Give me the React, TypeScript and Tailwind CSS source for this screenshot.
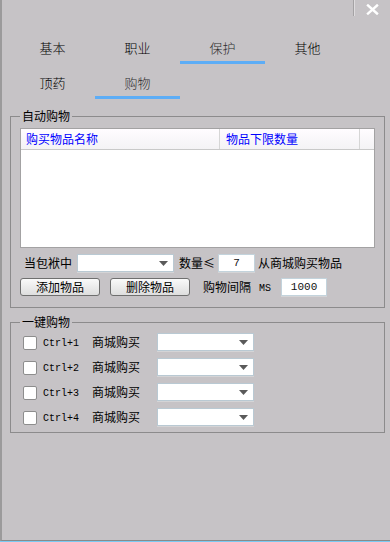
import React from "react";

const cjk = { fontFamily: '"Noto Sans CJK SC", "Noto Sans", sans-serif' };
const mono = { fontFamily: '"Liberation Mono", "DejaVu Sans Mono", monospace' };

function Combo({ width }: { width: string }) {
  return (
    <div
      className={`${width} h-[18px] bg-white border border-[#b9c9d3] shadow-[0_1px_0_#d4d4d6] flex items-center justify-end pr-[5px]`}
    >
      <svg width="9" height="5" viewBox="0 0 9 5">
        <path d="M0 0 H9 L4.5 5 Z" fill="#5a5a5a" />
      </svg>
    </div>
  );
}

function Field({ width, value }: { width: string; value: string }) {
  return (
    <div
      className={`${width} h-[18px] bg-white border border-[#c3d3dc] shadow-[0_1px_0_#d4d4d6] flex items-center justify-center text-[11px] text-[#111]`}
      style={mono}
    >
      {value}
    </div>
  );
}

function Button({ label }: { label: string }) {
  return (
    <button className="w-[80px] h-[18px] rounded-[3px] border border-[#6f6f6f] bg-gradient-to-b from-[#fafafa] to-[#dedede] text-[12px] leading-[14px] text-black flex items-center justify-center">
      {label}
    </button>
  );
}

const tabs = [
  { label: "基本", active: false },
  { label: "职业", active: false },
  { label: "保护", active: true },
  { label: "其他", active: false },
  { label: "顶药", active: false },
  { label: "购物", active: true },
];

export default function App() {
  return (
    <div
      className="w-[390px] h-[542px] bg-[#c6c3c6] flex flex-col overflow-hidden text-black"
      style={cjk}
    >
      <div className="h-[541px] border-l-2 border-b border-l-[#9b9a9b] border-b-[#8a8a8a] flex flex-col">
        {/* Title area */}
        <div className="h-[29px] relative shrink-0">
          <div className="absolute left-[351px] top-0 h-[16px] w-[2px] flex">
            <div className="w-[1px] bg-[#a4a2a4]" />
            <div className="w-[1px] bg-[#dedcde]" />
          </div>
          <svg
            className="absolute left-[364px] top-[4px]"
            width="13"
            height="11"
            viewBox="0 0 13 11"
          >
            <path
              d="M2 1.5 L11 9.5 M11 1.5 L2 9.5"
              stroke="#ffffff"
              strokeWidth="2.4"
              strokeLinecap="square"
            />
          </svg>
        </div>

        {/* Tabs */}
        <div className="grid grid-cols-[repeat(4,85px)] ml-[8px] shrink-0">
          {tabs.map((t) => (
            <div key={t.label} className="h-[35px] flex flex-col items-center">
              <span
                className={`pt-[11px] text-[13px] leading-[15px] font-light ${
                  t.active ? "text-[#2e2e2e]" : "text-black"
                }`}
              >
                {t.label}
              </span>
              {t.active && <div className="mt-auto h-[3px] w-full bg-[#5dadf6]" />}
            </div>
          ))}
        </div>

        {/* 自动购物 */}
        <fieldset className="mt-[10px] ml-[8px] w-[375px] border border-[#8c8b8c] px-[9px] pt-[5px] pb-[11px] shrink-0">
          <legend className="px-[2px] text-[12px] leading-[14px]">自动购物</legend>
          <div className="h-[120px] w-[355px] bg-white border border-[#a3a2a3] flex flex-col">
            <div className="h-[21px] flex border-b border-[#c9c9c9] bg-gradient-to-b from-[#fffcff] to-[#f4f3f5] text-[12px] leading-[20px] text-[#0000ff]">
              <div className="w-[199px] pl-[5px] border-r border-[#d6d6d6]">购买物品名称</div>
              <div className="w-[140px] pl-[6px] border-r border-[#d6d6d6]">物品下限数量</div>
            </div>
          </div>

          <div className="mt-[6px] h-[18px] flex items-center text-[12px] leading-[14px]">
            <span className="ml-[4px]">当包袱中</span>
            <div className="ml-[5px]">
              <Combo width="w-[97px]" />
            </div>
            <span className="ml-[5px]">数量≤</span>
            <div className="ml-[3px]">
              <Field width="w-[37px]" value="7" />
            </div>
            <span className="ml-[3px]">从商城购买物品</span>
          </div>

          <div className="mt-[6px] h-[18px] flex items-center text-[12px] leading-[14px]">
            <Button label="添加物品" />
            <div className="ml-[10px]">
              <Button label="删除物品" />
            </div>
            <span className="ml-[13px]">购物间隔</span>
            <span className="ml-[8px] mt-[4px] text-[10px]" style={mono}>
              MS
            </span>
            <div className="ml-[10px]">
              <Field width="w-[46px]" value="1000" />
            </div>
          </div>
        </fieldset>

        {/* 一键购物 */}
        <fieldset className="mt-[7px] ml-[8px] w-[375px] border border-[#8c8b8c] pl-[12px] pr-[9px] pt-[4px] pb-[6px] shrink-0">
          <legend className="ml-[-3px] px-[2px] text-[12px] leading-[14px]">一键购物</legend>
          <div className="flex flex-col gap-[7px]">
            {[1, 2, 3, 4].map((n) => (
              <div key={n} className="h-[18px] flex items-center text-[12px] leading-[14px]">
                <div className="w-[14px] h-[14px] mt-[1px] bg-white border border-[#8d8d8d] rounded-[2px]" />
                <span className="ml-[6px] mt-[4px] text-[10px]" style={mono}>
                  Ctrl+{n}
                </span>
                <span className="ml-[13px]">商城购买</span>
                <div className="ml-[17px]">
                  <Combo width="w-[97px]" />
                </div>
              </div>
            ))}
          </div>
        </fieldset>
      </div>
      <div className="h-[1px] bg-[#7ccaf2]" />
    </div>
  );
}
